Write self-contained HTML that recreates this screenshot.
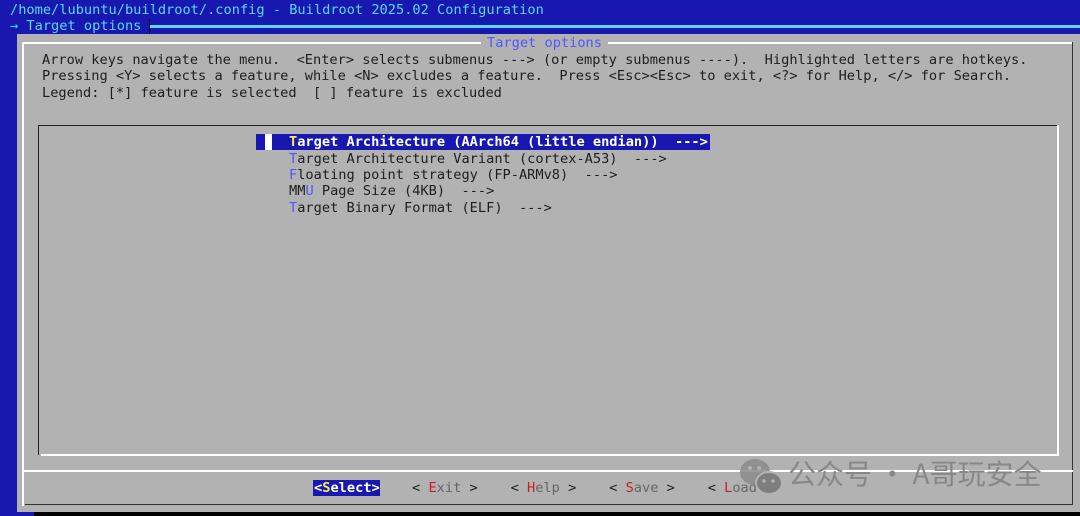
<!DOCTYPE html>
<html><head><meta charset="utf-8"><style>
body{margin:0;width:1080px;height:516px;overflow:hidden;background:#1818b0;position:relative;font-family:"DejaVu Sans Mono","Liberation Mono",monospace;font-size:13.65px;}
.t{position:absolute;white-space:pre;line-height:16.4px;color:#1e1e1e;}
.c{color:#5ad8f8;}
.b{color:#5555ff}
.r{color:#c82020}
.y{color:#f4f050}
.w{color:#fff}
.abs{position:absolute}
</style></head><body>
<div class="t c" style="left:10px;top:2px">/home/lubuntu/buildroot/.config - Buildroot 2025.02 Configuration</div>
<div class="t c" style="left:10px;top:18px">→ Target options</div>
<div class="abs" style="left:150px;top:25px;width:930px;height:3px;background:#5ad8f8"></div>
<div class="abs" style="left:149px;top:19px;width:1px;height:15px;background:#000"></div>
<div class="abs" style="left:17px;top:34px;width:1063px;height:478px;background:#b2b2b2"></div>
<div class="abs" style="left:34px;top:512px;width:1046px;height:4px;background:#000"></div>
<div class="abs" style="left:22px;top:42px;width:1051px;height:2px;background:#fff"></div>
<div class="abs" style="left:22px;top:42px;width:2px;height:464px;background:#fff"></div>
<div class="abs" style="left:1072px;top:42px;width:1px;height:463px;background:#333"></div>
<div class="abs" style="left:25px;top:504px;width:1048px;height:1px;background:#333"></div>
<div class="abs" style="left:22px;top:470px;width:1051px;height:2px;background:#fff"></div>
<div class="t b" style="left:481px;top:35px;background:#b2b2b2;padding:0 6px">Target options</div>
<div class="t" style="left:42px;top:52px">Arrow keys navigate the menu.  &lt;Enter&gt; selects submenus ---&gt; (or empty submenus ----).  Highlighted letters are hotkeys.
Pressing &lt;Y&gt; selects a feature, while &lt;N&gt; excludes a feature.  Press &lt;Esc&gt;&lt;Esc&gt; to exit, &lt;?&gt; for Help, &lt;/&gt; for Search.
Legend: [*] feature is selected  [ ] feature is excluded</div>
<div class="abs" style="left:38px;top:125px;width:1020px;height:1px;background:#222"></div>
<div class="abs" style="left:38px;top:125px;width:1px;height:330px;background:#222"></div>
<div class="abs" style="left:1057px;top:125px;width:2px;height:331px;background:#fff"></div>
<div class="abs" style="left:41px;top:454px;width:1018px;height:2px;background:#fff"></div>
<div class="abs" style="left:256px;top:134px;width:454px;height:16px;background:#1818b0"></div>
<div class="abs" style="left:265px;top:134px;width:7px;height:16px;background:#fff"></div>
<div class="t w" style="left:289px;top:134px;font-weight:bold"><span class="y">T</span>arget Architecture (AArch64 (little endian))  ---&gt;</div>
<div class="t" style="left:289px;top:150.5px"><span class="b">T</span>arget Architecture Variant (cortex-A53)  ---&gt;
<span class="b">F</span>loating point strategy (FP-ARMv8)  ---&gt;
MM<span class="b">U</span> Page Size (4KB)  ---&gt;
<span class="b">T</span>arget Binary Format (ELF)  ---&gt;</div>
<div class="abs" style="left:313px;top:480px;width:67px;height:16px;background:#1818b0"></div>
<div class="t w" style="left:314px;top:480px;font-weight:bold">&lt;<span class="y">S</span>elect&gt;</div>
<div class="t" style="left:412px;top:480px">&lt; <span class="r">E</span><span style="color:#666">xit</span> &gt;    &lt; <span class="r">H</span><span style="color:#666">elp</span> &gt;    &lt; <span class="r">S</span><span style="color:#666">ave</span> &gt;    &lt; <span class="r">L</span><span style="color:#666">oad</span> &gt;</div>
<svg class="abs" style="left:738px;top:456px" width="46" height="42" viewBox="0 0 46 42"><ellipse cx="17" cy="16" rx="15" ry="13" fill="#8a8a8a" opacity=".85"/><ellipse cx="31" cy="27" rx="13" ry="11" fill="#7e7e7e" stroke="#b2b2b2" stroke-width="2"/><circle cx="26" cy="25" r="1.8" fill="#b2b2b2"/><circle cx="35" cy="25" r="1.8" fill="#b2b2b2"/><circle cx="12" cy="12" r="2" fill="#b2b2b2"/><circle cx="21" cy="12" r="2" fill="#b2b2b2"/></svg>
<div class="abs" style="left:788px;top:454px;font-family:'Noto Sans CJK SC',sans-serif;font-size:28px;color:#878787;white-space:pre;line-height:38px">公众号 · A哥玩安全</div>
</body></html>
